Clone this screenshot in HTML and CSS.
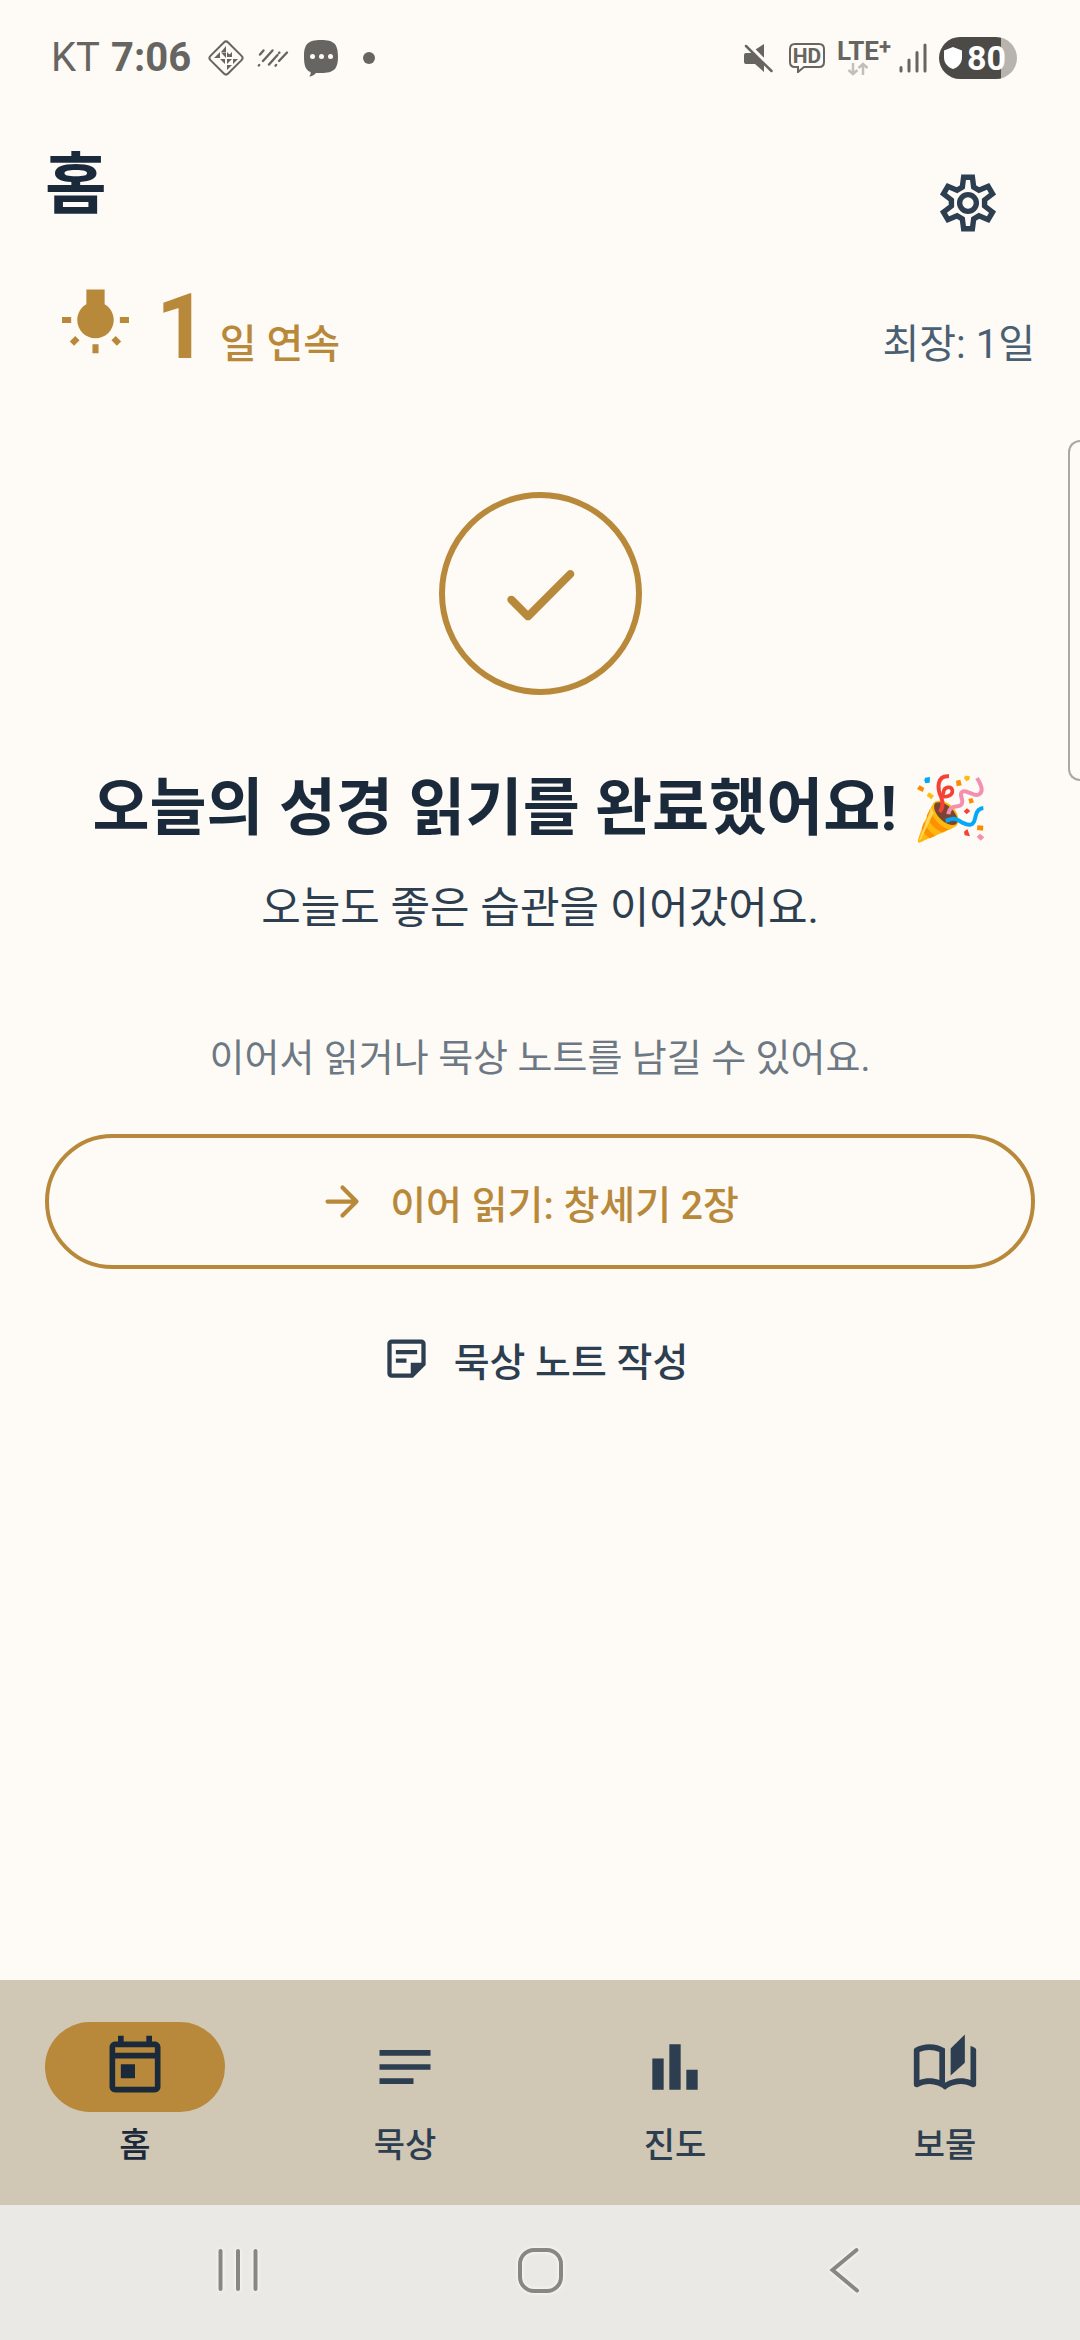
FILE: index.html
```html
<!DOCTYPE html>
<html lang="ko">
<head>
    <meta charset="UTF-8">
    <meta name="viewport" content="width=device-width, initial-scale=1.0">
    <title>홈</title>
    <link rel="stylesheet" href="styles.css">
</head>
<body>
    <!-- 상태 표시줄 -->
    <div class="status-bar">
        <div class="status-left">
            <span class="carrier">KT</span>
            <span class="clock">7:06</span>
            <svg class="status-diamond" width="38" height="38" viewBox="0 0 38 38">
                <rect x="6.500" y="6.500" width="25" height="25" rx="3" transform="rotate(45 19 19)" fill="none" stroke="currentColor" stroke-width="2"/>
                <path d="M19 7v6h-5zM13 13v6H7zM14 13.500h5V19zM20 13l5 5h-5zM13 20h5v5zM20 20h5l-5 5zM26 20h5l-5 5zM20 26h5l-5 5zM25 13v5h-5z" fill="currentColor"/>
            </svg>
            <svg class="status-lines" width="32" height="20" viewBox="0 0 32 20">
                <path d="M3 6.500l3.500-4M6 13l9.500-10.500M1.800 17.500l.4-.4M12 16.500l8.500-9.500M22 5l.4-.4M18.500 17.700l.6-.7M22 13l8-8.500" fill="none" stroke="currentColor" stroke-width="2.400" stroke-linecap="round"/>
            </svg>
            <svg class="status-bubble" width="36" height="38" viewBox="0 0 36 38">
                <path d="M18 1C31 1 35 5 35 17.500S31 34 18 34h-5c-2 2-4 3.500-7 3.500 1.500-1.500 2-3 1.500-4.500C2.500 31 1 26.500 1 17.500 1 5 5 1 18 1z" fill="currentColor"/>
                <circle cx="9.500" cy="17.500" r="2.500" fill="#fefaf5"/>
                <circle cx="18.500" cy="17.500" r="2.500" fill="#fefaf5"/>
                <circle cx="27.500" cy="17.500" r="2.500" fill="#fefaf5"/>
            </svg>
            <span class="status-dot"></span>
        </div>
        <div class="status-right">
            <svg width="30" height="30" viewBox="0 0 30 30">
                <path d="M21 1v14l-8.500-8.500zM1 12q0-2 2-2h7l11 10v9l-9-8H3q-2 0-2-2z" fill="currentColor"/>
                <path d="M5 1l25 25" stroke="#fefaf5" stroke-width="3"/>
                <path d="M3 3l25.500 25" stroke="currentColor" stroke-width="2.500" stroke-linecap="round"/>
            </svg>
            <span class="hd">
                <svg width="36" height="30" viewBox="0 0 36 30">
                    <path d="M6 1h24q5 0 5 5v13q0 5-5 5H15l-6 5v-5H6q-5 0-5-5V6q0-5 5-5z" fill="none" stroke="currentColor" stroke-width="2"/>
                </svg>
                <span class="hd-text">HD</span>
            </span>
            <span class="lte">
                <span class="lte-text">LTE<sup>+</sup></span>
                <svg width="22" height="14" viewBox="0 0 22 14">
                    <path d="M6 1v11M1.500 8L6 12l4.500-4M16 13V2M11.500 6L16 2l4.500 4" fill="none" stroke="#c2bfba" stroke-width="2.500"/>
                </svg>
            </span>
            <svg width="28" height="30" viewBox="0 0 28 30">
                <path d="M2 24.500V28M10 17v11M18 9.500V28M26 2v26" stroke="currentColor" stroke-width="3" stroke-linecap="round"/>
            </svg>
            <span class="battery">
                <svg width="18" height="22" viewBox="0 0 18 22">
                    <path d="M9 0l9 3.500v7C18 16 14.500 20 9 22 3.500 20 0 16 0 10.500v-7z" fill="#fff"/>
                </svg>
                <span>80</span>
            </span>
        </div>
    </div>

    <div class="edge-panel"></div>

    <main class="main-content">
        <header class="header">
            <h1 class="page-title">홈</h1>
            <button class="settings-button" type="button" aria-label="설정">
                <svg class="icon" viewBox="-12 -12 24 24">
                    <path d="M-1.550-9.100H1.550L2-5.600 3.850-4.530 7.100-5.890 8.660-3.210 5.850-1.070V1.070L8.660 3.210 7.100 5.890 3.850 4.530 2 5.600 1.550 9.100H-1.550L-2 5.600-3.850 4.530-7.100 5.890-8.660 3.210-5.850 1.070V-1.070L-8.660-3.210-7.100-5.890-3.850-4.530-2-5.600z" fill="none" stroke="currentColor" stroke-width="1.900"/>
                    <circle r="2.950" fill="none" stroke="currentColor" stroke-width="1.900"/>
                </svg>
            </button>
        </header>

        <section class="streak">
            <svg class="streak-icon" viewBox="0 0 24 24" fill="currentColor">
                <path d="M3.550 18.540l1.410 1.410 1.790-1.800-1.410-1.410-1.790 1.800zM11 22.450h2V19.500h-2v2.950zM4 10.500H1v2h3v-2zm11-4.190V1.500H9v4.810C7.210 7.350 6 9.280 6 11.500c0 3.310 2.690 6 6 6s6-2.690 6-6c0-2.220-1.210-4.150-3-5.190zm5 4.190v2h3v-2h-3zm-2.760 7.660l1.790 1.800 1.410-1.410-1.800-1.790-1.400 1.400z"/>
            </svg>
            <div class="streak-count">
                <span class="streak-number">1</span>
                <span class="streak-unit">일 연속</span>
            </div>
            <span class="streak-best">최장: 1일</span>
        </section>

        <section class="complete">
            <div class="check-circle">
                <svg width="96" height="96" viewBox="0 0 24 24" fill="currentColor">
                    <path d="M9 16.170L5.530 12.700c-.39-.39-1.020-.39-1.410 0-.39.39-.39 1.020 0 1.410l4.180 4.180c.39.39 1.020.39 1.410 0L20.290 7.710c.39-.39.39-1.020 0-1.410-.39-.39-1.020-.39-1.410 0L9 16.170z"/>
                </svg>
            </div>
            <h2 class="complete-title">오늘의 성경 읽기를 완료했어요!
                <svg class="popper" viewBox="153 95 225 225" role="img" aria-label="축하">
                    <path d="M218 190c8-12 45-6 62 18 14 20 17 45 3 54-14 9-80 34-104 47-6 3-10-1-8-7 8-28 33-90 47-112z" fill="#fdb90d"/>
                    <path d="M207 209c7 28 28 52 57 61l-20 9c-24-10-41-30-47-50zM190 245c5 20 18 36 34 44l-18 8c-12-8-20-18-24-30z" fill="#ff9100"/>
                    <path d="M211 205l7 15-38 79-6 5z" fill="#ffd75e"/>
                    <path d="M222 192c16-12 53 8 65 39 7 18-1 28-15 26-30-4-62-44-50-65z" fill="#784433"/>
                    <path d="M236 218c11-13 9-32 5-44-14-28-13-66 23-63" fill="none" stroke="#f44336" stroke-width="12"/>
                    <path d="M238 168c14 9 38 2 36-15-3-15-24-10-26 3-1 8-4 14-8 16" fill="none" stroke="#f44336" stroke-width="11"/>
                    <path d="M262 225c3-21 14-23 27-24 16-1 17-14 13-25-6-16 1-25 20-17 15 6 26 13 36 3 8-9 1-29-10-46" fill="none" stroke="#f48fb1" stroke-width="12"/>
                    <path d="M254 244c15-3 22-11 35-3 12 7 27 18 40 15 13-3 12-18 16-30 4-13 11-19 22-20" fill="none" stroke="#03a9f4" stroke-width="12"/>
                    <path d="M192 115l15-2-1 17-13 2-3-9z" fill="#03a9f4"/>
                    <path d="M308 216l10-9 10 8-11 10zM309 277l10-8 8 22-16-3z" fill="#f44336"/>
                    <path d="M347 292l10-9 13 11-11 10z" fill="#f48fb1"/>
                    <path d="M176 138l14 8-5 12-17-9zM285 124l13-3 4 17-15 3zM322 179l12-3 5 13-13 4zM349 258l18 1-1 15-18-2z" fill="#fb8c00"/>
                    <path d="M204 159l15 10-8 11-14-11zM312 109l15 2-2 10-9 5-7-9z" fill="#fdbd0f"/>
                </svg>
            </h2>
            <p class="complete-message">오늘도 좋은 습관을 이어갔어요.</p>
            <p class="complete-hint">이어서 읽거나 묵상 노트를 남길 수 있어요.</p>
            <button class="read-button" type="button">
                <svg class="button-icon" viewBox="0 0 24 24" fill="currentColor">
                    <path d="M5 13h11.170l-4.880 4.880c-.39.39-.39 1.030 0 1.420.39.39 1.020.39 1.410 0l6.590-6.590c.39-.39.39-1.020 0-1.410l-6.580-6.600c-.39-.39-1.020-.39-1.410 0-.39.39-.39 1.020 0 1.410L16.170 11H5c-.55 0-1 .45-1 1s.45 1 1 1z"/>
                </svg>
                이어 읽기: 창세기 2장
            </button>
            <button class="note-button" type="button">
                <svg class="button-icon" viewBox="0 0 24 24" fill="currentColor">
                    <path d="M19 5v9h-5v5H5V5h14m0-2H5c-1.100 0-2 .9-2 2v14c0 1.100.9 2 2 2h10l6-6V5c0-1.100-.9-2-2-2zm-7 11H7v-2h5v2zm5-4H7V8h10v2z"/>
                </svg>
                묵상 노트 작성
            </button>
        </section>
    </main>

    <!-- 하단 탭 -->
    <nav class="tab-bar">
        <a href="#home" class="tab active">
            <span class="tab-icon">
                <svg class="icon" viewBox="0 0 24 24" fill="currentColor">
                    <path d="M19 3h-1V1h-2v2H8V1H6v2H5c-1.110 0-1.990.9-1.990 2L3 19c0 1.100.89 2 2 2h14c1.100 0 2-.9 2-2V5c0-1.100-.9-2-2-2zm0 16H5V9h14v10zm0-12H5V5h14v2zM7 11h5v5H7z"/>
                </svg>
            </span>
            <span class="tab-label">홈</span>
        </a>
        <a href="#notes" class="tab">
            <span class="tab-icon">
                <svg class="icon" viewBox="0 0 24 24" fill="currentColor">
                    <path d="M3 18h12v-2H3v2zM3 6v2h18V6H3zm0 7h18v-2H3v2z"/>
                </svg>
            </span>
            <span class="tab-label">묵상</span>
        </a>
        <a href="#progress" class="tab">
            <span class="tab-icon">
                <svg class="icon" viewBox="0 0 24 24" fill="currentColor">
                    <path d="M4 9h4v11H4zM16 13h4v7h-4zM10 4h4v16h-4z"/>
                </svg>
            </span>
            <span class="tab-label">진도</span>
        </a>
        <a href="#treasure" class="tab">
            <span class="tab-icon">
                <svg class="icon" viewBox="0 0 24 24" fill="currentColor">
                    <path d="M22.470 5.200c-.47-.24-.96-.44-1.470-.61v12.030c-1.140-.41-2.310-.62-3.500-.62-1.900 0-3.780.54-5.500 1.580V5.480C10.380 4.550 8.510 4 6.500 4c-1.790 0-3.480.44-4.970 1.200-.33.16-.53.51-.53.88v12.080c0 .58.47.99 1 .99.16 0 .32-.04.48-.12C3.690 18.400 5.050 18 6.500 18c2.070 0 3.980.82 5.500 2 1.520-1.180 3.430-2 5.500-2 1.450 0 2.810.4 4.020 1.040.16.08.32.12.48.12.52 0 1-.41 1-.99V6.080c0-.37-.2-.72-.53-.88zM10 16.620C8.860 16.210 7.690 16 6.500 16s-2.360.21-3.500.62V6.710C4.110 6.240 5.280 6 6.500 6c1.200 0 2.390.25 3.500.72v9.900zM19 .5l-5 5V15l5-4.500V.5z"/>
                </svg>
            </span>
            <span class="tab-label">보물</span>
        </a>
    </nav>

    <!-- 시스템 내비게이션 -->
    <div class="system-bar">
        <button type="button" aria-label="최근 앱">
            <svg width="48" height="48" viewBox="0 0 48 48"><path d="M6.500 5v38M24 5v38M41.500 5v38"/></svg>
        </button>
        <button type="button" aria-label="홈 화면">
            <svg width="48" height="48" viewBox="0 0 48 48"><rect x="4" y="4" width="41" height="41" rx="14"/></svg>
        </button>
        <button type="button" aria-label="뒤로">
            <svg width="48" height="48" viewBox="0 0 48 48"><path d="M37.500 4L13.500 24l24.500 20.500"/></svg>
        </button>
    </div>
</body>
</html>
```
FILE: styles.css
```css
* {
    box-sizing: border-box;
}

body {
    font-family: Roboto, 'Noto Sans CJK KR', sans-serif;
    background: #fefaf5;
    color: #2c3e50;
    margin: 0;
    min-height: 100vh;
    display: flex;
    flex-direction: column;
    position: relative;
}

h1, h2, p {
    margin: 0;
}

svg {
    display: block;
    flex: none;
}

button {
    font: inherit;
    color: inherit;
    background: none;
    border: none;
    padding: 0;
    cursor: pointer;
}

.icon {
    width: 68px;
    height: 68px;
}

/* 상태 표시줄 */
.status-bar {
    height: 116px;
    padding: 0 63px 0 51px;
    display: flex;
    align-items: center;
    justify-content: space-between;
    color: #666561;
}

.status-left,
.status-right {
    display: flex;
    align-items: center;
}

.status-right {
    gap: 12px;
}

.carrier,
.clock {
    font-size: 40px;
    line-height: 48px;
}

.carrier {
    margin-right: 11px;
}

.clock {
    font-weight: 700;
}

.status-diamond {
    margin-left: 16px;
}

.status-lines {
    margin-left: 12px;
}

.status-bubble {
    margin-left: 14px;
}

.status-dot {
    width: 12px;
    height: 12px;
    margin-left: 24px;
    border-radius: 50%;
    background: currentColor;
}

.hd {
    display: grid;
    margin-left: 4px;
}

.hd > * {
    grid-area: 1 / 1;
}

.hd-text {
    font-size: 21px;
    font-weight: 700;
    line-height: 26px;
    text-align: center;
}

.lte {
    display: flex;
    flex-direction: column;
    width: 50px;
}

.lte svg {
    margin-left: 10px;
}

.lte-text {
    font-size: 26px;
    font-weight: 700;
    line-height: 22px;
    white-space: nowrap;
}

.lte-text sup {
    font-size: 22px;
    line-height: 1px;
    vertical-align: 6px;
}

.battery {
    width: 78px;
    height: 42px;
    display: flex;
    align-items: center;
    gap: 5px;
    padding-left: 5px;
    border-radius: 21px;
    background: linear-gradient(to right, #4b4a46 80%, #b7b3af 80%);
    color: #fff;
    font-size: 34px;
    font-weight: 700;
    line-height: 42px;
}

.edge-panel {
    position: absolute;
    top: 440px;
    right: 0;
    width: 12px;
    height: 341px;
    border: 2px solid #aaa8a5;
    border-right: none;
    border-radius: 12px 0 0 12px;
}

/* 본문 */
.main-content {
    flex: 1;
    padding: 19px 45px 0;
}

.header {
    display: flex;
    align-items: flex-start;
    justify-content: space-between;
}

.page-title {
    font-size: 67px;
    font-weight: 700;
    line-height: 100px;
    color: #1b2a3b;
}

.settings-button {
    width: 135px;
    height: 135px;
    display: flex;
    align-items: center;
    justify-content: center;
}

.streak {
    display: flex;
    align-items: baseline;
    padding: 2px 0 0 14px;
    color: #b8893a;
}

.streak-icon {
    width: 73px;
    height: 73px;
    margin-right: 24px;
}

.streak-count {
    display: flex;
    flex: 1;
    align-items: baseline;
    gap: 12px;
}

.streak-number {
    font-size: 90px;
    font-weight: 700;
    line-height: 112px;
}

.streak-unit {
    font-size: 40px;
    font-weight: 500;
}

.streak-best {
    font-size: 40px;
    color: #4a6072;
}

.complete {
    display: flex;
    flex-direction: column;
    align-items: center;
    padding-top: 108px;
    text-align: center;
}

.check-circle {
    width: 203px;
    height: 203px;
    display: flex;
    align-items: center;
    justify-content: center;
    border: 6px solid #b8893a;
    border-radius: 50%;
    color: #b8893a;
}

.complete-title {
    margin-top: 69px;
    font-size: 62px;
    font-weight: 700;
    line-height: 90px;
    color: #1b2a3b;
}

.popper {
    display: inline-block;
    width: 75px;
    height: 75px;
    vertical-align: -16px;
}

.complete-message {
    margin-top: 22px;
    font-size: 43px;
    line-height: 64px;
}

.complete-hint {
    margin-top: 90px;
    font-size: 38px;
    line-height: 56px;
    color: #6c7883;
}

.read-button,
.note-button {
    height: 135px;
    display: flex;
    align-items: center;
    justify-content: center;
    gap: 22px;
    font-size: 39px;
    font-weight: 500;
}

.read-button {
    width: 100%;
    margin-top: 48px;
    padding: 0 67px 0 43px;
    border: 4px solid #b8893a;
    border-radius: 68px;
    color: #b8893a;
}

.note-button {
    margin-top: 22px;
    padding: 0 45px 0 34px;
}

.button-icon {
    width: 51px;
    height: 51px;
}

/* 하단 탭 */
.tab-bar {
    display: flex;
    height: 225px;
    padding-top: 42px;
    background: #d0c7b4;
}

.tab {
    flex: 1;
    display: flex;
    flex-direction: column;
    align-items: center;
    gap: 9px;
    color: #2c3e50;
    text-decoration: none;
}

.tab-icon {
    width: 180px;
    height: 90px;
    display: flex;
    align-items: center;
    justify-content: center;
    border-radius: 45px;
}

.tab-label {
    font-size: 34px;
    font-weight: 500;
    line-height: 48px;
}

.tab.active {
    color: #1b2a3b;
}

.tab.active .tab-icon {
    background: #b8893a;
}

/* 시스템 내비게이션 */
.system-bar {
    display: flex;
    height: 135px;
    padding: 0 86px 5px 87px;
    background: #eae9e5;
}

.system-bar button {
    flex: 1;
    display: flex;
    align-items: center;
    justify-content: center;
}

.system-bar svg {
    fill: none;
    stroke: #888784;
    stroke-width: 4;
    stroke-linecap: round;
    filter: drop-shadow(0 0 2px #fff);
}
```
